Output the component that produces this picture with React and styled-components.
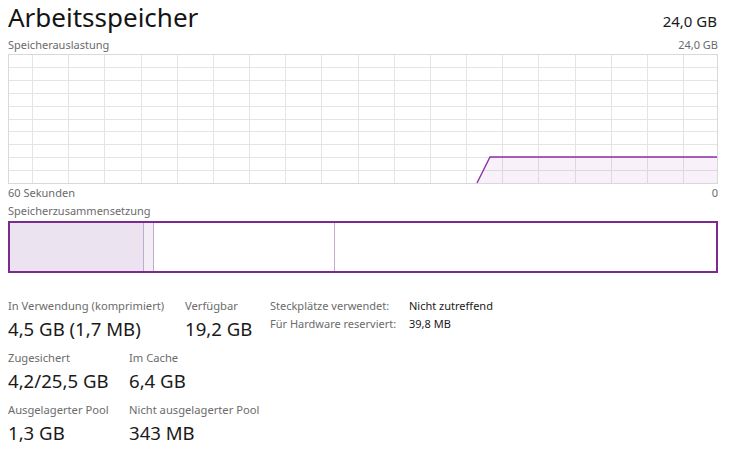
import React from "react";
import styled, { createGlobalStyle } from "styled-components";

const GlobalStyle = createGlobalStyle`
  html, body {
    margin: 0;
    padding: 0;
    background: #ffffff;
  }
  body {
    font-family: "Segoe UI", "Noto Sans", "Open Sans", sans-serif;
    color: #1a1a1a;
  }
`;

const GRAPH_W = 710;
const GRAPH_H = 129;

function UsageGraph() {
  const rows = Array.from({ length: 9 }, (v, i) => ((i + 1) * GRAPH_H) / 10);
  const cols = Array.from({ length: 20 }, (v, i) => 24 + i * 36.17).filter(
    (x) => x < GRAPH_W - 1
  );
  const usedY = 103;
  return (
    <svg width={GRAPH_W} height={GRAPH_H + 1} style={{ display: "block" }}>
      {rows.map((y) => (
        <line key={"h" + y} x1="0" x2={GRAPH_W} y1={Math.round(y) + 0.5} y2={Math.round(y) + 0.5} stroke="#e4e4e4" />
      ))}
      {cols.map((x) => (
        <line key={"v" + x} y1="0" y2={GRAPH_H} x1={Math.round(x) + 0.5} x2={Math.round(x) + 0.5} stroke="#e4e4e4" />
      ))}
      <polygon
        points={`469,${GRAPH_H} 482,${usedY} ${GRAPH_W - 1},${usedY} ${GRAPH_W - 1},${GRAPH_H}`}
        fill="#8b12ae"
        fillOpacity="0.06"
      />
      <polyline
        points={`469,${GRAPH_H} 482,${usedY} ${GRAPH_W - 1},${usedY}`}
        fill="none"
        stroke="#8e30a8"
        strokeWidth="1.4"
      />
      <rect x="0.5" y="0.5" width={GRAPH_W - 1} height={GRAPH_H} fill="none" stroke="#d9d9d9" />
    </svg>
  );
}

function App() {
  return (
    <Page>
      <GlobalStyle />
      <Header>
        <Title>Arbeitsspeicher</Title>
        <Total>24,0 GB</Total>
      </Header>
      <SubRow>
        <Small>Speicherauslastung</Small>
        <Small>24,0 GB</Small>
      </SubRow>
      <UsageGraph />
      <SubRow>
        <Small>60 Sekunden</Small>
        <Small>0</Small>
      </SubRow>
      <SectionLabel>Speicherzusammensetzung</SectionLabel>
      <CompositionBar>
        <Segment width={133} fill="#ebe3f0" />
        <Segment width={9} fill="#f3eef6" edge />
        <Segment width={180} fill="#ffffff" edge />
        <Segment grow fill="#ffffff" edge />
      </CompositionBar>

      <Stats>
        <LeftBlock>
          <StatRow cols="177px auto">
            <Stat>
              <StatLabel>In Verwendung (komprimiert)</StatLabel>
              <StatValue>4,5 GB (1,7 MB)</StatValue>
            </Stat>
            <Stat>
              <StatLabel>Verfügbar</StatLabel>
              <StatValue>19,2 GB</StatValue>
            </Stat>
          </StatRow>
          <StatRow cols="121px auto">
            <Stat>
              <StatLabel>Zugesichert</StatLabel>
              <StatValue>4,2/25,5 GB</StatValue>
            </Stat>
            <Stat>
              <StatLabel>Im Cache</StatLabel>
              <StatValue>6,4 GB</StatValue>
            </Stat>
          </StatRow>
          <StatRow cols="121px auto">
            <Stat>
              <StatLabel>Ausgelagerter Pool</StatLabel>
              <StatValue>1,3 GB</StatValue>
            </Stat>
            <Stat>
              <StatLabel>Nicht ausgelagerter Pool</StatLabel>
              <StatValue>343 MB</StatValue>
            </Stat>
          </StatRow>
        </LeftBlock>
        <InfoTable>
          <InfoKey>Steckplätze verwendet:</InfoKey>
          <InfoValue>Nicht zutreffend</InfoValue>
          <InfoKey>Für Hardware reserviert:</InfoKey>
          <InfoValue>39,8 MB</InfoValue>
        </InfoTable>
      </Stats>
    </Page>
  );
}

const Page = styled.div`
  width: 710px;
  height: 451px;
  padding: 0 11px 0 8px;
  overflow: hidden;
`;

const Header = styled.div`
  display: flex;
  justify-content: space-between;
  align-items: baseline;
  height: 36px;
`;

const Title = styled.div`
  font-size: 26px;
  line-height: 36px;
  margin-top: -1px;
  color: #141414;
  white-space: nowrap;
`;

const Total = styled.div`
  font-size: 15px;
  color: #1a1a1a;
  margin-right: 1px;
`;

const SubRow = styled.div`
  display: flex;
  justify-content: space-between;
  height: 18px;
  align-items: center;
`;

const Small = styled.span`
  font-size: 11px;
  color: #6b6b6b;
  line-height: 16px;
`;

const SectionLabel = styled.div`
  font-size: 11px;
  color: #6b6b6b;
  line-height: 16px;
  margin-top: 1px;
  height: 18px;
`;

const CompositionBar = styled.div`
  display: flex;
  height: 48px;
  border: 2px solid #7b2a90;
`;

const Segment = styled.div`
  flex: ${(p) => (p.grow ? "1 1 auto" : `0 0 ${p.width}px`)};
  background: ${(p) => p.fill};
  border-left: ${(p) => (p.edge ? "1px solid #bfabcb" : "none")};
`;

const Stats = styled.div`
  display: flex;
  margin-top: 24px;
`;

const LeftBlock = styled.div`
  width: 262px;
  display: flex;
  flex-direction: column;
  gap: 6px;
`;

const StatRow = styled.div`
  display: grid;
  grid-template-columns: ${(p) => p.cols};
`;

const Stat = styled.div`
  display: flex;
  flex-direction: column;
  white-space: nowrap;
`;

const StatLabel = styled.span`
  font-size: 11.2px;
  line-height: 18px;
  color: #6b6b6b;
`;

const StatValue = styled.span`
  font-size: 18.6px;
  line-height: 28px;
  color: #1a1a1a;
`;

const InfoTable = styled.div`
  display: grid;
  grid-template-columns: 139px auto;
  align-content: start;
  font-size: 11px;
  line-height: 18px;
  white-space: nowrap;
`;

const InfoKey = styled.span`
  color: #6b6b6b;
`;

const InfoValue = styled.span`
  color: #1a1a1a;
`;

export default App;
